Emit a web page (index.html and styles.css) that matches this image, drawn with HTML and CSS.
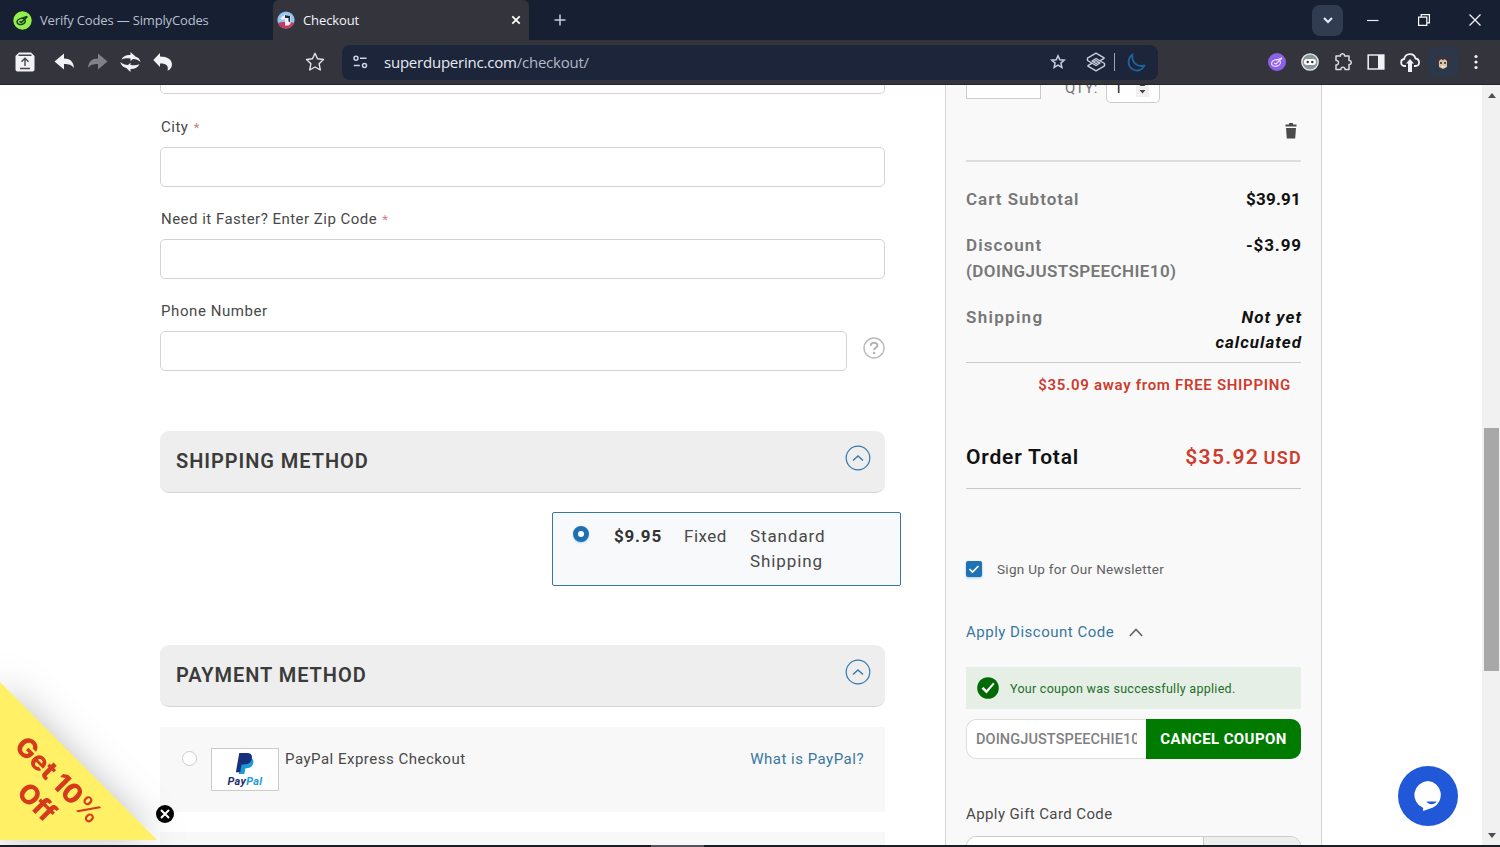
FILE: index.html
```html
<!DOCTYPE html>
<html lang="en">
<head>
    <meta charset="UTF-8">
    <meta name="viewport" content="width=device-width, initial-scale=1.0">
    <title>Checkout</title>
    <link rel="stylesheet" href="styles.css">
</head>
<body>

    <!-- Browser tabs -->
    <div class="tabs">
        <div class="tab">
            <svg class="favicon" width="19" height="19" viewBox="0 0 19 19"><circle cx="9.5" cy="9.5" r="9.2" fill="#94ee4c"/><g fill="none" stroke="#173a1a" stroke-width="1.5"><ellipse cx="8.2" cy="10.5" rx="4.2" ry="3" transform="rotate(-15 8.2 10.5)"/><path d="M6.5 10.500l2 .8 6-5.800M8.500 7.500l5.500-2"/></g></svg>
            <span class="tab-title verify">Verify Codes — SimplyCodes</span>
        </div>
        <div class="tab active">
            <svg class="favicon" width="18" height="18" viewBox="0 0 18 18"><circle cx="9" cy="9" r="8.600" fill="#8fc5f0"/><path d="M1 12a8.600 8.600 0 0 0 16 0l-4-1H5z" fill="#c93660"/><path d="M3.500 7l5-4 5 2v8l-2 1.500H8V8l-3 1z" fill="#f3eef2"/><path d="M8 4l5 1v6l-1.500-.5V7H8z" fill="#23263a"/></svg>
            <span class="tab-title">Checkout</span>
            <svg class="tab-close" width="10" height="10" viewBox="0 0 10 10"><path d="M1.300 1.300l7.400 7.400M8.700 1.300L1.300 8.700" stroke="#fff" stroke-width="1.800"/></svg>
        </div>
        <svg class="new-tab" width="12" height="12" viewBox="0 0 12 12"><path d="M6 .5v11M.5 6h11" stroke="#c9cedb" stroke-width="1.500"/></svg>
        <div class="window-controls">
            <span class="tab-search"><svg width="10" height="7" viewBox="0 0 10 7"><path d="M1 1l4 4 4-4" fill="none" stroke="#e8ecf6" stroke-width="2"/></svg></span>
            <svg width="12" height="12" viewBox="0 0 12 12"><path d="M0 6.500h11.500" stroke="#e6e9f2" stroke-width="1.200"/></svg>
            <svg width="12" height="12" viewBox="0 0 12 12"><path d="M.6 3.200h8.200v8.200H.6zM3.200 3V.6h8.200v8.200H9" fill="none" stroke="#fff" stroke-width="1.200"/></svg>
            <svg width="12" height="12" viewBox="0 0 12 12"><path d="M.5.5l11 11M11.500.5l-11 11" stroke="#f0f2f8" stroke-width="1.300"/></svg>
        </div>
    </div>

    <!-- Browser toolbar -->
    <div class="toolbar">
        <div class="nav-icons">
            <svg width="20" height="20" viewBox="0 0 20 20"><path d="M4 .5h12l3.500 3.500v13.500a2 2 0 0 1-2 2h-15a2 2 0 0 1-2-2V4z" fill="#f1f1f6"/><path d="M3.500 3.200h13M10 14V6.500M6.500 9.800L10 6.300l3.500 3.500M5 16.500h10" fill="none" stroke="#44444e" stroke-width="1.400"/></svg>
            <svg width="21" height="18" viewBox="0 0 21 18"><path d="M10 .5v5c6 0 9.500 3 10 9.500-2.500-3.300-5-4-10-4v5.500L.5 8.500z" fill="#f1f1f6"/></svg>
            <svg width="21" height="18" viewBox="0 0 21 18"><path d="M11 .5v5C5 5.500 1.500 8.500 1 15c2.500-3.300 5-4 10-4v5.500l9.500-8z" fill="#808087"/></svg>
            <svg width="21" height="20" viewBox="0 0 21 20"><path d="M1.500 7.500C3 4 6.500 2.500 10.500 3V0l5 4.500c3 1 4.500 2.800 5 5.500-2-2-4.500-3-7.500-3L10.500 9V6.500c-3.500-.5-6.500-.3-9 1zM.3 10c.7 3 3 5.500 6 6L10.500 20v-3c4 .3 7.500-1.500 9-4.800-2.500 1.200-5.500 1.500-9 .8V10.800L8 13C5 13 2.500 12 .3 10z" fill="#f1f1f6"/></svg>
            <svg width="20" height="18" viewBox="0 0 20 18"><path d="M7 0v3.500c7.500 0 12 3 12 8 0 3-1.800 5-4.500 6.300 1.500-5.300-1.500-7.500-7.500-7.300V14L.3 7z" fill="#f1f1f6"/></svg>
        </div>
        <svg class="bookmark" width="20" height="20" viewBox="0 0 20 20"><path d="M10 1.300l2.500 5.500 6 .7-4.400 4.200 1.200 6.300-5.300-3-5.300 3 1.200-6.300L1.500 7.500l6-.7z" fill="none" stroke="#e4e4ec" stroke-width="1.400" stroke-linejoin="round"/></svg>
        <div class="address-bar">
            <svg width="15" height="14" viewBox="0 0 15 14"><g fill="none" stroke="#cdd4e6" stroke-width="1.500"><circle cx="3" cy="3.200" r="2"/><path d="M7 3.200h6.500M.8 10.500h6"/><circle cx="11.500" cy="10.500" r="2"/></g></svg>
            <span class="url">superduperinc.com<span>/checkout/</span></span>
            <div class="address-icons">
                <svg width="16" height="16" viewBox="0 0 16 16"><path d="M8 1.800l1.800 4 4.400.4-3.300 2.900 1 4.300L8 11.200l-3.900 2.200 1-4.300-3.300-2.900 4.400-.4z" fill="none" stroke="#c8cedf" stroke-width="1.500"/></svg>
                <svg class="layers" width="20" height="20" viewBox="0 0 20 20"><path d="M18.500 6.200L10 1.200 1.500 6.200v2.300l8.500 5 4-2.500-4-2.500-3 1.700M1.500 13.800l8.500 5 8.500-5v-2.300l-8.500-5L6 9l4 2.500 3-1.700M18.500 6.200l-4.300 2.500M1.500 13.800l4.300-2.500" fill="none" stroke="#c8cedf" stroke-width="1.400" stroke-linejoin="round"/></svg>
                <i class="divider"></i>
                <svg width="19" height="19" viewBox="0 0 19 19"><path d="M5.500 1.500C0 6 .5 13.500 6 16.500c4.500 2.300 9.500.5 11.500-4C10.500 14.500 4.500 10 5.500 1.500z" fill="none" stroke="#20629f" stroke-width="1.800" stroke-linejoin="round"/></svg>
            </div>
        </div>
        <div class="extensions">
            <svg width="18" height="18" viewBox="0 0 18 18"><circle cx="9" cy="9" r="9" fill="#8e60e8"/><g fill="none" stroke="#eadfff" stroke-width="1.200"><ellipse cx="8" cy="10" rx="4.500" ry="3.200" transform="rotate(-15 8 10)"/><path d="M6 10l2 1 6-6M8 7l6-2"/></g></svg>
            <svg width="18" height="18" viewBox="0 0 18 18"><circle cx="9" cy="9" r="8.200" fill="#8b969b" stroke="#e5ebec" stroke-width="1.300"/><rect x="3" y="6" width="12" height="6" rx="3" fill="#fff"/><circle cx="6.700" cy="9" r="1.200" fill="#333"/><circle cx="11.300" cy="9" r="1.200" fill="#333"/></svg>
            <svg width="18" height="18" viewBox="0 0 18 18"><path d="M2 3h4.500c-.6-3 4.600-3 4 0H15v4.500c3-.6 3 4.600 0 4V16.500h-4c.3-3-4.500-3-4 0H2V12c3.300.3 3.300-5 0-4.500z" fill="none" stroke="#dadae2" stroke-width="1.500" stroke-linejoin="round"/></svg>
            <svg width="18" height="18" viewBox="0 0 18 18"><path d="M1.200 2h15.600v14H1.200z" fill="none" stroke="#e9e9ef" stroke-width="1.600"/><path d="M11 2h6v14h-6z" fill="#f1f1f6"/></svg>
            <svg width="20" height="19" viewBox="0 0 20 19"><path d="M6 13H5c-5 0-5-6.500-.8-7C5.500-.3 14-.3 15.500 5.500c5 .8 4.500 7.500 0 7.500H14" fill="none" stroke="#f1f1f6" stroke-width="1.800"/><path d="M10 6l4 4.500h-2V19H8v-8.500H6z" fill="#f1f1f6"/></svg>
            <span class="profile"><svg width="14" height="14" viewBox="0 0 14 14"><path d="M0 0l4 2.500h6L14 0l-.5 6L11 8v4l-4 2-4-2V8L.5 6z" fill="#403138"/><path d="M3 6l2.500-2L7 5.500 8.500 4 11 6v6l-4 2-4-2z" fill="#dcc3a4"/><path d="M4.300 7h1.400v2H4.300zM8.300 7h1.400v2H8.300z" fill="#222"/><path d="M4.500 11h5l-2.500 2z" fill="#f5e6df"/></svg></span>
            <svg class="more" width="4" height="16" viewBox="0 0 4 16" fill="#f1f1f6"><circle cx="2" cy="2.500" r="1.600"/><circle cx="2" cy="8" r="1.600"/><circle cx="2" cy="13.500" r="1.600"/></svg>
        </div>
    </div>

    <!-- Page -->
    <div class="page">
        <main class="checkout">
            <div class="input cut-off"></div>
            <label class="label-city">City <em>*</em></label>
            <div class="input"></div>
            <label class="label-zip">Need it Faster? Enter Zip Code <em>*</em></label>
            <div class="input"></div>
            <label class="label-phone">Phone Number</label>
            <div class="phone-row">
                <div class="input"></div>
                <svg width="22" height="22" viewBox="0 0 22 22"><circle cx="11" cy="11" r="10" fill="none" stroke="#b9b9b9" stroke-width="1.400"/><path d="M7.800 8.800c0-4 6.600-4 6.600-.4 0 2.400-3.300 2.300-3.300 4.800" fill="none" stroke="#b3b3b3" stroke-width="2"/><circle cx="11.100" cy="16" r="1.300" fill="#b3b3b3"/></svg>
            </div>

            <div class="section-header shipping-header">
                <h2>SHIPPING METHOD</h2>
                <svg width="26" height="26" viewBox="0 0 26 26"><path d="M8 15.500l5-4.500 5 4.500" fill="none" stroke="#3478a8" stroke-width="1.400"/><circle cx="13" cy="13" r="11.800" fill="none" stroke="#3478a8" stroke-width="1.200"/></svg>
            </div>
            <div class="shipping-option">
                <i class="radio checked"></i>
                <b>$9.95</b>
                <span class="rate-type">Fixed</span>
                <span class="rate-name">Standard<br>Shipping</span>
            </div>

            <div class="section-header payment-header">
                <h2>PAYMENT METHOD</h2>
                <svg width="26" height="26" viewBox="0 0 26 26"><path d="M8 15.500l5-4.500 5 4.500" fill="none" stroke="#3478a8" stroke-width="1.400"/><circle cx="13" cy="13" r="11.800" fill="none" stroke="#3478a8" stroke-width="1.200"/></svg>
            </div>
            <div class="payment-option">
                <i class="radio"></i>
                <div class="paypal-logo">
                    <svg width="20" height="23" viewBox="0 0 20 24"><path d="M6 6h9c3 .5 4.500 2.500 3.500 6-1 4-4 5-8 5l-1.200 6H3.500z" fill="#1c9ad6"/><path d="M4 1h8c4.500 0 6 2.500 5 6.500-1 4-4 5.500-8.500 5.500H6.500L5 21H.5z" fill="#15307c"/></svg>
                    <span><b>Pay</b><b class="pal">Pal</b></span>
                </div>
                <span class="payment-name">PayPal Express Checkout</span>
                <a class="what-is">What is PayPal?</a>
            </div>
            <div class="payment-option next"></div>
        </main>

        <aside class="summary">
            <div class="item-row">
                <div class="thumb"></div>
                <span class="qty-label">QTY:</span>
                <div class="qty"><span>1</span><svg width="13" height="24" viewBox="0 0 13 24"><path d="M0 0h13v24H0z" fill="#f0f0f0"/><path d="M3.500 13h6l-3-3zM3.500 17h6l-3 3.500z" fill="#444"/></svg></div>
            </div>
            <svg class="trash" width="12" height="16" viewBox="0 0 12 16"><path d="M4 0h4v1.500h3.500v2H.5v-2H4zM1 5h10l-.8 10.500H1.800z" fill="#4b4b4b"/></svg>
            <div class="totals">
                <div class="row"><span class="name subtotal">Cart Subtotal</span><b>$39.91</b></div>
                <div class="row"><span class="name discount">Discount<br><span class="code">(DOINGJUSTSPEECHIE10)</span></span><b class="minus">-$3.99</b></div>
                <div class="row"><span class="name ship">Shipping</span><b class="pending">Not yet<br>calculated</b></div>
            </div>
            <div class="free-shipping">$35.09 away from FREE SHIPPING</div>
            <div class="order-total"><span>Order Total</span><b>$35.92 <small>USD</small></b></div>
            <div class="newsletter">
                <svg width="16" height="16" viewBox="0 0 16 16"><rect width="16" height="16" rx="2" fill="#1f73b4"/><path d="M3.500 8l3 3 6-6" fill="none" stroke="#fff" stroke-width="1.600"/></svg>
                <span>Sign Up for Our Newsletter</span>
            </div>
            <div class="discount-toggle">
                <a>Apply Discount Code</a>
                <svg width="14" height="9" viewBox="0 0 14 9"><path d="M.8 8L7 1.500 13.200 8" fill="none" stroke="#666" stroke-width="1.700"/></svg>
            </div>
            <div class="message">
                <svg width="22" height="22" viewBox="0 0 22 22"><circle cx="11" cy="11" r="10.800" fill="#016a05"/><path d="M4.500 11.500l2-1.500 3 3 6.500-7.300 1.500 1.200-8 9.600z" fill="#fff"/></svg>
                <span>Your coupon was successfully applied.</span>
            </div>
            <div class="coupon">
                <div class="coupon-input"><span>DOINGJUSTSPEECHIE10</span></div>
                <button>CANCEL COUPON</button>
            </div>
            <div class="gift-label">Apply Gift Card Code</div>
            <div class="gift"><div class="gift-input"></div><div class="gift-button"></div></div>
        </aside>

        <div class="scrollbar">
            <i class="arrow up"></i>
            <i class="thumb-bar"></i>
            <i class="arrow down"></i>
        </div>

        <div class="promo">
            <div class="promo-text">Get 10<span>%</span><br>Off</div>
        </div>
        <svg class="promo-close" width="18" height="18" viewBox="0 0 18 18"><circle cx="9" cy="9" r="9" fill="#000"/><path d="M5 5l8 8M13 5l-8 8" stroke="#fff" stroke-width="2"/></svg>
        <div class="chat">
            <svg width="30" height="32" viewBox="0 0 30 32"><path d="M15 1a14 14 0 0 1 5 26.500L10 31l.2-3A14 14 0 0 1 15 1z" fill="#fff"/><path d="M13.500 21.500h10c-2 3.500-8 3.500-10 0z" fill="#2158d8"/></svg>
        </div>
    </div>

    <div class="taskbar"><i></i></div>

</body>
</html>
```
FILE: styles.css
```css
/* Global Styles */
* {
    box-sizing: border-box;
}

body {
    margin: 0;
    height: 847px;
    display: flex;
    flex-direction: column;
    overflow: hidden;
    font-family: Roboto, Arial, sans-serif;
    font-size: 15px;
    color: #494949;
    background: white;
}

svg {
    display: block;
    flex: none;
}

span, b, a, label {
    white-space: nowrap;
}

/* Tabs */
.tabs {
    height: 40px;
    display: flex;
    align-items: center;
    background: #171f32;
    font-family: "Open Sans", sans-serif;
    font-size: 13px;
}

.tab {
    width: 273px;
    height: 40px;
    padding-left: 13px;
    display: flex;
    align-items: center;
    gap: 8px;
    color: #b9bfcd;
}

.tab.active {
    width: 256px;
    padding: 0 8px 0 4px;
    background: #34343c;
    border-radius: 6px 6px 0 0;
    color: #f3f3f6;
}

.tab-title {
    letter-spacing: -0.1px;
}

.verify {
    letter-spacing: -0.16px;
}

.tab-close {
    margin-left: auto;
}

.new-tab {
    margin-left: 25px;
}

.window-controls {
    margin-left: auto;
    padding-right: 19px;
    display: flex;
    align-items: center;
    gap: 39px;
}

.tab-search {
    width: 31px;
    height: 31px;
    margin-right: -15px;
    display: flex;
    align-items: center;
    justify-content: center;
    background: #323c50;
    border-radius: 8px;
}

/* Toolbar */
.toolbar {
    height: 45px;
    display: flex;
    align-items: center;
    background: #34343c;
    border-bottom: 1px solid #25252c;
}

.nav-icons {
    width: 305px;
    padding-left: 15px;
    display: flex;
    align-items: center;
    gap: 12px;
}

.nav-icons svg:first-child {
    margin-right: 7px;
}

.address-bar {
    width: 816px;
    height: 35px;
    margin-left: 17px;
    padding: 0 12px 0 11px;
    display: flex;
    align-items: center;
    background: #1c2539;
    border-radius: 8px;
}

.url {
    margin-left: 16px;
    font-family: "Open Sans", sans-serif;
    font-size: 15px;
    letter-spacing: -0.22px;
    color: #e8ebf3;
}

.url span {
    color: #b4bac8;
}

.address-icons {
    margin-left: auto;
    display: flex;
    align-items: center;
}

.layers {
    margin-left: 20px;
}

.divider {
    width: 1px;
    height: 18px;
    margin: 0 12px 0 8px;
    background: #9aa3b5;
}

.extensions {
    margin-left: auto;
    padding-right: 22px;
    display: flex;
    align-items: center;
    gap: 15px;
}

.profile {
    width: 30px;
    height: 30px;
    margin: 0 1px 0 -7px;
    display: flex;
    align-items: center;
    justify-content: center;
    background: #2c384a;
    border-radius: 6px;
}

/* Page */
.page {
    position: relative;
    height: 760px;
    padding-left: 160px;
    display: flex;
    overflow: hidden;
}

.checkout {
    width: 725px;
    flex: none;
}

label {
    height: 20px;
    margin: 22px 0 10px;
    padding-left: 1px;
    display: block;
    line-height: 20px;
}

label em {
    margin-left: 1px;
    font-size: 13px;
    font-style: normal;
    color: #d08080;
}

.label-city {
    margin-top: 23px;
    letter-spacing: 0.5px;
}

.label-zip {
    letter-spacing: 0.48px;
}

.label-phone {
    letter-spacing: 0.58px;
}

.input {
    height: 40px;
    background: white;
    border: 1px solid #d3d3d3;
    border-radius: 5px;
}

.input.cut-off {
    height: 9px;
    border-top: 0;
    border-radius: 0 0 5px 5px;
}

.phone-row {
    display: flex;
    gap: 16px;
}

.phone-row .input {
    width: 688px;
}

.phone-row svg {
    margin-top: 6px;
}

.section-header {
    height: 62px;
    padding: 14px 14px 0 16px;
    display: flex;
    justify-content: space-between;
    background: #eee;
    border-bottom: 1px solid #d5d5d5;
    border-radius: 9px;
}

.shipping-header {
    margin-top: 60px;
}

.section-header h2 {
    margin: 0;
    font-size: 20px;
    line-height: 32px;
    font-weight: 600;
    letter-spacing: 0.95px;
    color: #3b3b3b;
}

.shipping-option {
    width: 349px;
    height: 74px;
    margin: 19px 0 0 392px;
    padding: 11px 0 0 20px;
    display: flex;
    background: #f8f9fa;
    border: 1px solid #39789a;
    border-radius: 2px;
    font-size: 17px;
    line-height: 25px;
    letter-spacing: 0.5px;
}

.shipping-option b {
    width: 70px;
    margin-left: 25px;
    letter-spacing: 0.8px;
    color: #333;
}

.rate-type {
    width: 66px;
}

.rate-name {
    letter-spacing: 0.9px;
}

.radio {
    width: 16px;
    height: 16px;
    margin-top: 2px;
    background: white;
    border: 1px solid #ccc;
    border-radius: 50%;
    flex: none;
}

.radio.checked {
    border: 5px solid #1f70b3;
    box-shadow: 0 1px 2px #a5d5f5;
}

.payment-header {
    margin-top: 59px;
}

.payment-option {
    height: 85px;
    margin-top: 20px;
    padding: 21px 21px 0 22px;
    display: flex;
    background: #f8f8f8;
}

.payment-option .radio {
    width: 15px;
    height: 15px;
    margin-top: 3px;
}

.paypal-logo {
    width: 68px;
    height: 43px;
    margin: 0 6px 0 14px;
    padding-top: 3px;
    display: flex;
    flex-direction: column;
    align-items: center;
    background: white;
    border: 1px solid #ccc;
    font-size: 11px;
    line-height: 14px;
    letter-spacing: 0.3px;
    font-style: italic;
    color: #1f2f70;
}

.paypal-logo .pal {
    color: #239bd5;
}

.payment-name, .what-is {
    line-height: 22px;
    letter-spacing: 0.5px;
}

.what-is {
    margin-left: auto;
}

.payment-option.next {
    margin-top: 20px;
}

a {
    color: #38779f;
}

/* Order summary */
.summary {
    width: 377px;
    margin-left: 60px;
    padding: 0 20px;
    flex: none;
    background: #f9f9f9;
    border: 1px solid #d4d4d4;
    border-width: 0 1px;
}

.item-row {
    height: 37px;
    display: flex;
    align-items: flex-start;
}

.thumb {
    width: 75px;
    height: 14px;
    background: white;
    border: 1px solid #ccc;
    border-top: 0;
}

.qty-label {
    width: 41px;
    margin: -8px 0 0 24px;
    line-height: 22px;
    color: #777;
    letter-spacing: 0.2px;
}

.qty {
    width: 54px;
    height: 18px;
    padding: 0 10px 0 7px;
    display: flex;
    justify-content: space-between;
    background: white;
    border: 1px solid #ccc;
    border-top: 0;
    border-radius: 0 0 5px 5px;
    color: #222;
}

.qty span {
    margin-top: -8px;
    line-height: 22px;
}

.qty svg {
    margin-top: -12px;
}

.trash {
    margin: 1px 4px 0 auto;
}

.totals {
    height: 203px;
    margin-top: 21px;
    padding-top: 25px;
    border-top: 2px solid #ddd;
    border-bottom: 1px solid #c9c9c9;
    font-size: 17px;
    line-height: 25.500px;
    font-weight: 600;
}

.row {
    margin-bottom: 20.700px;
    display: flex;
    justify-content: space-between;
    color: #777;
}

.subtotal {
    letter-spacing: 1px;
}

.discount {
    letter-spacing: 1.100px;
}

.code {
    letter-spacing: 0.4px;
}

.ship {
    letter-spacing: 1.300px;
}

.row b {
    color: #111;
    text-align: right;
    font-weight: 700;
    letter-spacing: 0.2px;
}

.row .minus {
    margin-right: -1px;
    letter-spacing: 0.9px;
}

.row .pending {
    margin-right: -1px;
    font-style: italic;
    letter-spacing: 1px;
}

.free-shipping {
    padding: 10px 10px 0 0;
    font-size: 15px;
    line-height: 24px;
    font-weight: 600;
    letter-spacing: 0.7px;
    text-align: right;
    white-space: nowrap;
    color: #cd3c2d;
}

.order-total {
    height: 92px;
    padding-top: 44px;
    display: flex;
    justify-content: space-between;
    border-bottom: 1px solid #c9c9c9;
    font-size: 21px;
    line-height: 32px;
    font-weight: 600;
    letter-spacing: 0.8px;
    color: #111;
}

.order-total b {
    margin-right: -1px;
    color: #cd3c2d;
    font-weight: 600;
    letter-spacing: 1.300px;
}

.order-total small {
    margin-left: -2px;
    font-size: 18px;
}

.newsletter {
    height: 20px;
    margin-top: 70px;
    display: flex;
    align-items: center;
    gap: 15px;
    font-size: 13.500px;
    letter-spacing: 0.3px;
    color: #606060;
}

.newsletter svg {
    filter: drop-shadow(0 1px 1px #9ccff2);
}

.discount-toggle {
    height: 22px;
    margin-top: 42px;
    display: flex;
    align-items: center;
    gap: 15px;
    letter-spacing: 0.5px;
}

.message {
    height: 42px;
    margin-top: 24px;
    padding-left: 11px;
    display: flex;
    align-items: center;
    gap: 11px;
    background: #e5efe6;
    font-size: 12.500px;
    letter-spacing: 0.28px;
    color: #236e28;
}

.coupon {
    height: 40px;
    margin-top: 10px;
    display: flex;
}

.coupon-input {
    width: 180px;
    padding: 0 9px;
    background: white;
    border: 1px solid #ddd;
    border-right: 0;
    border-radius: 10px 0 0 10px;
}

.coupon-input span {
    display: block;
    overflow: hidden;
    font-size: 14.500px;
    line-height: 39px;
    font-weight: 500;
    letter-spacing: 0.1px;
    color: #808080;
}

button {
    width: 156px;
    padding: 0 0 1px;
    background: #007b00;
    border: none;
    border-radius: 0 10px 10px 0;
    font-family: Roboto, Arial, sans-serif;
    font-size: 15px;
    font-weight: bold;
    letter-spacing: 0.4px;
    color: white;
}

.gift-label {
    height: 22px;
    margin-top: 44px;
    line-height: 22px;
    letter-spacing: 0.4px;
}

.gift {
    height: 40px;
    margin-top: 11px;
    display: flex;
    overflow: hidden;
    border: 1px solid #ccc;
    border-radius: 10px;
}

.gift-input {
    width: 237px;
    background: white;
    border-right: 1px solid #ccc;
}

.gift-button {
    flex: 1;
    background: #eee;
}

/* Scrollbar */
.scrollbar {
    width: 18px;
    height: 760px;
    margin-left: auto;
    padding: 8px 1px 7px 2px;
    display: flex;
    flex-direction: column;
    align-items: center;
    background: #f1f1f1;
}

.arrow {
    border: 4px solid transparent;
    border-top: 0;
    border-bottom: 5px solid #505050;
}

.arrow.down {
    margin-top: auto;
    border-top: 5px solid #505050;
    border-bottom: 0;
}

.thumb-bar {
    width: 15px;
    height: 243px;
    margin-top: 330px;
    background: #a8a8a8;
}

/* Floating promo and chat */
.promo {
    position: absolute;
    left: 0;
    bottom: 5px;
    filter: drop-shadow(0 0 18px rgba(0, 0, 0, 0.25));
}

.promo::before {
    content: "";
    display: block;
    width: 157px;
    height: 158px;
    background: #fff066;
    clip-path: polygon(0 0, 100% 100%, 0 100%);
}

.promo-text {
    position: absolute;
    left: -14px;
    top: 78px;
    width: 124px;
    font-family: Inter, sans-serif;
    font-size: 27px;
    line-height: 31px;
    font-weight: 800;
    text-align: center;
    color: #d53a1c;
    transform: rotate(45deg);
}

.promo-text span {
    font-weight: 500;
}

.promo-close {
    position: absolute;
    left: 156px;
    top: 720px;
}

.chat {
    position: absolute;
    left: 1398px;
    top: 681px;
    width: 60px;
    height: 60px;
    padding: 14px 15px;
    background: #2158d8;
    border-radius: 50%;
}

.taskbar {
    height: 2px;
    background: #1b1e25;
}

.taskbar i {
    display: block;
    width: 53px;
    height: 2px;
    margin-left: 651px;
    background: #55555b;
}
```
